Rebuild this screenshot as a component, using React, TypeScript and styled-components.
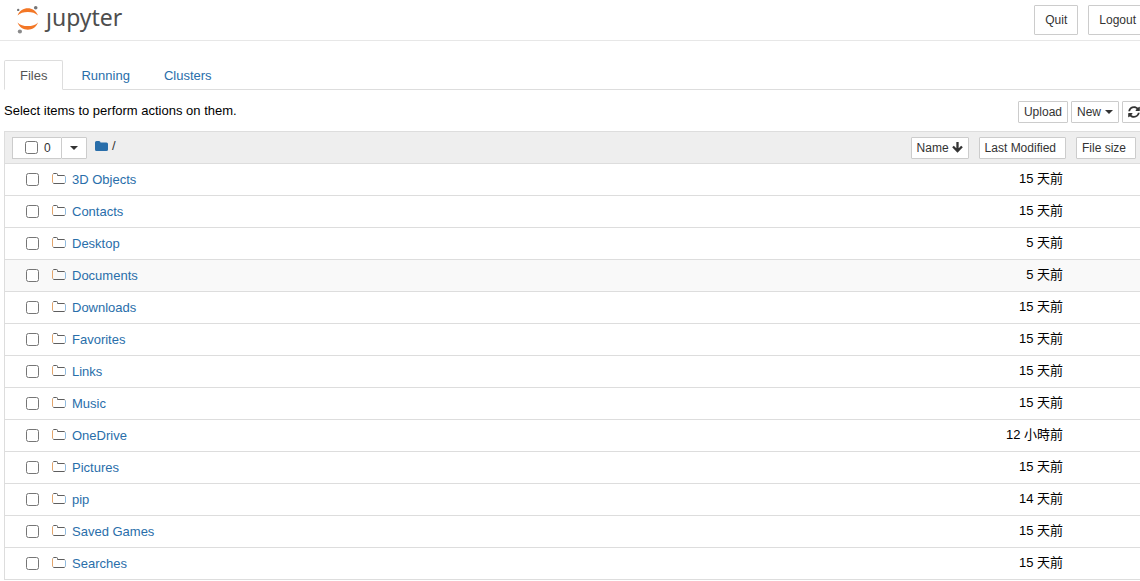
import React from "react";
import styled, { createGlobalStyle, css } from "styled-components";

const GlobalStyle = createGlobalStyle`
  *, *::before, *::after { box-sizing: border-box; }
  body {
    margin: 0;
    background: #fff;
    color: #000;
    font-family: "Liberation Sans", "Noto Sans CJK TC", sans-serif;
    font-size: 13px;
    line-height: 20px;
    overflow: hidden;
  }
  button, input { font: inherit; margin: 0; }
  a { color: #296eaa; text-decoration: none; }
`;

const Header = styled.header`
  display: flex;
  justify-content: space-between;
  align-items: flex-start;
  height: 41px;
  padding: 5px 0 0 16px;
  border-bottom: 1px solid #e7e7e7;
  overflow: hidden;
`;

const Logo = styled.a`
  display: flex;
  align-items: flex-start;
  gap: 6px;
  color: #4e4e4e;
`;

const Wordmark = styled.span`
  color: #4e4e4e;
  font-family: "Noto Sans", sans-serif;
  font-size: 23px;
  line-height: 24px;
`;

const DotlessJ = styled.span`
  display: inline-block;
  clip-path: inset(8px -4px -8px -4px);
`;

const Session = styled.div`
  display: flex;
  flex: none;
  gap: 10px;
  margin-right: -7px;
`;

const Button = styled.button<{ $large?: boolean }>`
  display: inline-flex;
  align-items: center;
  flex: none;
  gap: 4px;
  padding: 0 5px;
  height: 22px;
  color: #333;
  background: #fff;
  border: 1px solid #ccc;
  border-radius: 1px;
  font-size: 12px;
  white-space: nowrap;
  ${(p) => p.$large && css`
    height: 30px;
    padding: 0 10px;
  `}
`;

const SortButton = styled(Button)<{ $sorted?: boolean }>`
  gap: 3px;
  padding-right: ${(p) => (p.$sorted ? 5 : 9)}px;
`;

const Main = styled.main`
  padding: 19px 0 0 4px;
`;

const Tabs = styled.nav`
  display: flex;
  gap: 2px;
  border-bottom: 1px solid #ddd;
`;

const Tab = styled.a<{ $active?: boolean }>`
  height: 30px;
  margin-bottom: -1px;
  padding: 5px 15px 4px;
  border: 1px solid transparent;
  border-radius: 2px 2px 0 0;
  ${(p) => p.$active && css`
    color: #555;
    background: #fff;
    border-color: #ddd #ddd #fff;
  `}
`;

const Toolbar = styled.div`
  display: flex;
  justify-content: space-between;
  align-items: flex-end;
  height: 33px;
`;

const Hint = styled.p`
  margin: 0;
  padding-bottom: 2px;
`;

const Actions = styled.div`
  display: flex;
  gap: 3px;
  margin-right: -6px;
`;

const Listing = styled.section`
  margin-top: 8px;
  border: 1px solid #ddd;
  border-width: 1px 0 0 1px;
`;

const ListHeader = styled.div`
  display: flex;
  align-items: center;
  justify-content: space-between;
  height: 32px;
  padding: 0 4px 0 7px;
  background: #eee;
  border-bottom: 1px solid #ddd;
`;

const Group = styled.div<{ $gap: number }>`
  display: flex;
  align-items: center;
  gap: ${(p) => p.$gap}px;
`;

const Selector = styled.div`
  display: flex;
`;

const SelectAll = styled.label`
  display: flex;
  align-items: center;
  gap: 6px;
  width: 49px;
  height: 22px;
  padding-left: 12px;
  background: #fff;
  border: 1px solid #ccc;
  border-right: 0;
  font-size: 12px;
  color: #333;
`;

const SelectMenu = styled(Button)`
  width: 26px;
  padding: 1px 0 0;
  justify-content: center;
`;

const Breadcrumb = styled.div`
  display: flex;
  align-items: center;
  gap: 4px;
  padding-bottom: 3px;
  color: #333;

  a { display: flex; }
`;

const Checkbox = styled.input.attrs({ type: "checkbox" })`
  flex: none;
  width: 13px;
  height: 13px;
`;

const Rows = styled.ul`
  margin: 0;
  padding: 0;
  list-style: none;
`;

const Row = styled.li<{ $hover?: boolean }>`
  display: flex;
  align-items: center;
  height: 32px;
  padding: 0 77px 0 21px;
  background: ${(p) => (p.$hover ? "#f9f9f9" : "#fff")};
  border-bottom: 1px solid #ddd;
`;

const ItemLink = styled.a`
  display: flex;
  align-items: center;
  gap: 6px;
  margin-left: 13px;
`;

const Modified = styled.time`
  margin-left: auto;
  padding-bottom: 2px;
`;

const JupyterMark = () => (
  <svg width="24" height="30" viewBox="0 0 24 30" aria-hidden="true">
    <path d="M1.500 10.500C3.500 5.500 7.500 3.300 11.800 3.300S20 5.500 22 10.500C19.500 7.800 16 6.900 11.800 6.900S4 7.800 1.500 10.500Z" fill="#f37726" />
    <path d="M1.500 17.500C3.500 22.500 7.500 24.700 11.800 24.700S20 22.500 22 17.500C19.500 20.200 16 21.100 11.800 21.100S4 20.200 1.500 17.500Z" fill="#f37726" />
    <circle cx="19.700" cy="2.700" r="1.800" fill="#767677" />
    <circle cx="2.200" cy="4.900" r="1.200" fill="#767677" />
    <circle cx="3.900" cy="26.500" r="2.100" fill="#8a8a8b" />
  </svg>
);

const FolderOutline = () => (
  <svg width="14" height="14" viewBox="0 0 14 14" fill="none" aria-hidden="true">
    <path d="M.5 1.500V9.500" stroke="#e3a56c" />
    <path d="M13.500 3.500V9.500" stroke="#8fbbe0" />
    <path d="M1 1.200Q1.300 .5 2 .5H4.500Q5.500 .5 5.500 1.500V2.500H12Q12.700 2.500 13 3.200M13 9.800Q12.700 10.500 12 10.500H2Q1.300 10.500 1 9.800" stroke="#5e5e5e" />
  </svg>
);

const FolderSolid = () => (
  <svg width="13" height="11" viewBox="0 0 13 11" aria-hidden="true">
    <path d="M0 1.500Q0 0 1.500 0H4Q5.500 0 5.500 1.500H11.500Q13 1.500 13 3V8.500Q13 10 11.500 10H1.500Q0 10 0 8.500Z" fill="#296eaa" />
  </svg>
);

const Caret = () => (
  <svg width="8" height="4" viewBox="0 0 8 4" aria-hidden="true">
    <path d="M0 0H8L4 4Z" fill="#333" />
  </svg>
);

const ArrowDown = () => (
  <svg width="11" height="11" viewBox="0 0 11 11" fill="none" aria-hidden="true">
    <path d="M5.500 0V9M1 4.500L5.500 9L10 4.500" stroke="#333" strokeWidth="2.300" />
  </svg>
);

const Refresh = () => (
  <svg width="12" height="12" viewBox="0 0 512 512" fill="#333" aria-hidden="true">
    <path d="M370.700 133.300C339.500 104 298.900 88 255.800 88c-77.500.1-144.300 53.200-162.800 126.900-1.300 5.400-6.100 9.100-11.700 9.100H24.100c-7.500 0-13.200-6.800-11.800-14.200C33.900 94.900 134.800 8 256 8c66.400 0 126.800 26.100 171.300 68.700L463 41c15.100-15.100 41-4.400 41 17v134c0 13.300-10.700 24-24 24H346c-21.400 0-32.100-25.900-17-41zM32 296h134c21.400 0 32.100 25.900 17 41l-41.800 41.800c31.300 29.300 71.800 45.300 114.900 45.200 77.400-.1 144.300-53.100 162.800-126.800 1.300-5.400 6.100-9.100 11.700-9.100h57.300c7.500 0 13.200 6.800 11.800 14.200C478.100 417.100 377.200 504 256 504c-66.400 0-126.800-26.100-171.300-68.700L49 471c-15.100 15.100-41 4.400-41-17V320c0-13.300 10.700-24 24-24z" />
  </svg>
);

const folders = [
  { name: "3D Objects", modified: "15 天前" },
  { name: "Contacts", modified: "15 天前" },
  { name: "Desktop", modified: "5 天前" },
  { name: "Documents", modified: "5 天前", hover: true },
  { name: "Downloads", modified: "15 天前" },
  { name: "Favorites", modified: "15 天前" },
  { name: "Links", modified: "15 天前" },
  { name: "Music", modified: "15 天前" },
  { name: "OneDrive", modified: "12 小時前" },
  { name: "Pictures", modified: "15 天前" },
  { name: "pip", modified: "14 天前" },
  { name: "Saved Games", modified: "15 天前" },
  { name: "Searches", modified: "15 天前" },
];

export default function App() {
  return (
    <>
      <GlobalStyle />
      <Header>
        <Logo href="#">
          <JupyterMark />
          <Wordmark><DotlessJ>j</DotlessJ>upyter</Wordmark>
        </Logo>
        <Session>
          <Button $large>Quit</Button>
          <Button $large>Logout</Button>
        </Session>
      </Header>
      <Main>
        <Tabs>
          <Tab href="#files" $active>Files</Tab>
          <Tab href="#running">Running</Tab>
          <Tab href="#clusters">Clusters</Tab>
        </Tabs>
        <Toolbar>
          <Hint>Select items to perform actions on them.</Hint>
          <Actions>
            <Button>Upload</Button>
            <Button>New <Caret /></Button>
            <Button aria-label="Refresh"><Refresh /></Button>
          </Actions>
        </Toolbar>
        <Listing>
          <ListHeader>
            <Group $gap={8}>
              <Selector>
                <SelectAll><Checkbox />0</SelectAll>
                <SelectMenu aria-label="Select by type"><Caret /></SelectMenu>
              </Selector>
              <Breadcrumb>
                <a href="#root" aria-label="Home"><FolderSolid /></a>
                <span>/</span>
              </Breadcrumb>
            </Group>
            <Group $gap={10}>
              <SortButton $sorted>Name <ArrowDown /></SortButton>
              <SortButton>Last Modified</SortButton>
              <SortButton>File size</SortButton>
            </Group>
          </ListHeader>
          <Rows>
            {folders.map((f) => (
              <Row key={f.name} $hover={f.hover}>
                <Checkbox aria-label={f.name} />
                <ItemLink href="#"><FolderOutline />{f.name}</ItemLink>
                <Modified>{f.modified}</Modified>
              </Row>
            ))}
          </Rows>
        </Listing>
      </Main>
    </>
  );
}
